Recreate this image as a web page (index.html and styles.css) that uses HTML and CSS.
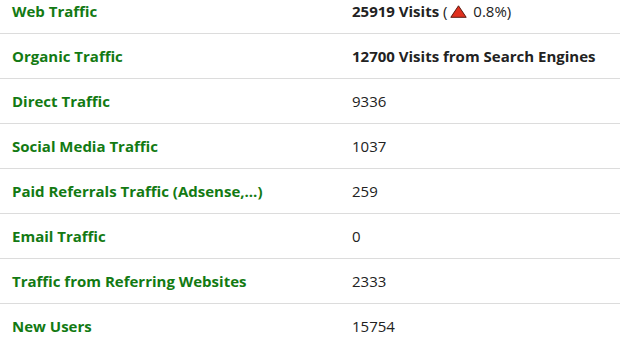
FILE: index.html
```html
<!DOCTYPE html>
<html>
<head>
<meta charset="utf-8">
<link rel="stylesheet" href="styles.css">
</head>
<body>
<div class="stats">
  <div class="row"><div class="label">Web Traffic</div><div class="value"><b>25919 Visits</b> (<svg class="up" width="17" height="13" viewBox="0 0 17 13"><polygon points="8.5,0.8 16.2,12.3 0.8,12.3" fill="#e0301e" stroke="#5a1a10" stroke-width="1" stroke-linejoin="round"/></svg> 0.8%)</div></div>
  <div class="row"><div class="label">Organic Traffic</div><div class="value"><b>12700 Visits from Search Engines</b></div></div>
  <div class="row"><div class="label">Direct Traffic</div><div class="value">9336</div></div>
  <div class="row"><div class="label">Social Media Traffic</div><div class="value">1037</div></div>
  <div class="row"><div class="label">Paid Referrals Traffic (Adsense,...)</div><div class="value">259</div></div>
  <div class="row"><div class="label">Email Traffic</div><div class="value">0</div></div>
  <div class="row"><div class="label">Traffic from Referring Websites</div><div class="value">2333</div></div>
  <div class="row"><div class="label">New Users</div><div class="value">15754</div></div>
</div>
</body>
</html>
```
FILE: styles.css
```css
html, body {
  margin: 0;
  padding: 0;
  background: #fff;
}
body {
  font-family: "Open Sans", "Noto Sans", sans-serif;
  font-size: 15px;
  color: #222;
  overflow: hidden;
}
.stats {
  margin-top: -11px;
}
.row {
  display: grid;
  grid-template-columns: 340px 1fr;
  height: 44px;
  align-items: center;
  border-bottom: 1px solid #dcdcdc;
  padding: 0 12px;
}
.label {
  color: #137a13;
  font-weight: 700;
}
.value b {
  font-weight: 700;
  color: #222;
}
.up {
  vertical-align: -1px;
  margin: 0 2px 0 3px;
}
```
